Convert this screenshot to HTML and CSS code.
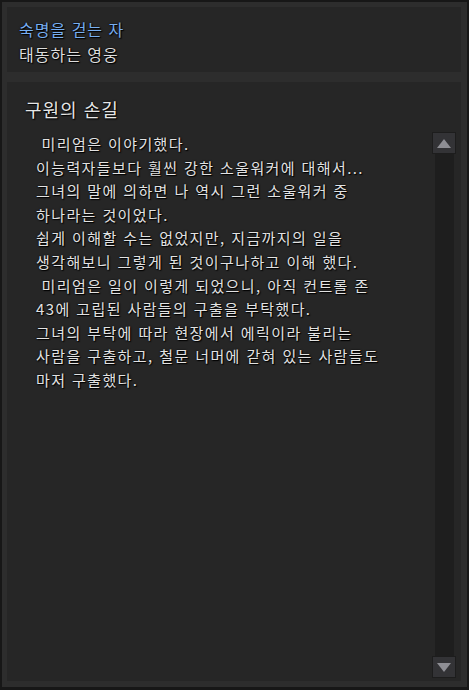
FILE: index.html
```html
<!DOCTYPE html>
<html lang="ko">
<head>
    <meta charset="UTF-8">
    <title>구원의 손길</title>
    <link rel="stylesheet" href="styles.css">
</head>
<body>
<div class="frame">

    <!-- quest header -->
    <section class="panel quest-head">
        <p class="quest-chapter">숙명을 걷는 자</p>
        <p class="quest-name">태동하는 영웅</p>
    </section>

    <!-- quest story -->
    <section class="panel quest-body">
        <h1 class="quest-title">구원의 손길</h1>
        <div class="story-row">
            <p class="story">&nbsp;미리엄은 이야기했다.<br>이능력자들보다 훨씬 강한 소울워커에 대해서...<br>그녀의 말에 의하면 나 역시 그런 소울워커 중<br>하나라는 것이었다.<br>쉽게 이해할 수는 없었지만, 지금까지의 일을<br>생각해보니 그렇게 된 것이구나하고 이해 했다.<br>&nbsp;미리엄은 일이 이렇게 되었으니, 아직 컨트롤 존<br>43에 고립된 사람들의 구출을 부탁했다.<br>그녀의 부탁에 따라 현장에서 에릭이라 불리는<br>사람을 구출하고, 철문 너머에 갇혀 있는 사람들도<br>마저 구출했다.</p>
            <div class="scrollbar">
                <div class="scroll-btn">
                    <svg width="14" height="9" viewBox="0 0 14 9"><polygon points="7,0 14,9 0,9" fill="#8e8e94"/></svg>
                </div>
                <div class="scroll-track"></div>
                <div class="scroll-btn">
                    <svg width="14" height="9" viewBox="0 0 14 9"><polygon points="0,0 14,0 7,9" fill="#8e8e94"/></svg>
                </div>
            </div>
        </div>
    </section>

</div>
</body>
</html>
```

FILE: styles.css
```css
body {
    margin: 0;
    padding: 2px;
    background-color: #171717;
    font-family: "Noto Sans CJK KR", "Noto Sans", sans-serif;
}

p {
    margin: 0;
}

.frame {
    height: 685px;
    width: 465px;
    box-sizing: border-box;
    padding: 5px 6px 6px 5px;
    background-color: #2d2d2d;
    display: flex;
    flex-direction: column;
    gap: 10px;
}

.panel {
    background-color: #262626;
}

.quest-head {
    height: 65px;
    box-sizing: border-box;
    padding: 11px 12px 0;
}

.quest-chapter,
.quest-name,
.quest-title,
.story {
    text-shadow: 0 0 2px #000, 1px 1px 1px #000;
    letter-spacing: 1px;
}

.quest-chapter {
    color: #78aef0;
    font-size: 16px;
    line-height: 22px;
}

.quest-name {
    color: #dcdcdc;
    font-size: 16px;
    line-height: 28px;
}

.quest-body {
    flex: 1;
    display: flex;
    flex-direction: column;
    padding: 0 5px 3px 0;
}

.quest-title {
    margin: 0;
    padding: 14px 0 0 18px;
    height: 36px;
    color: #e6e6e6;
    font-size: 18px;
    font-weight: normal;
    line-height: 26px;
}

.story-row {
    flex: 1;
    display: flex;
}

.story {
    flex: 1;
    padding: 0 0 0 29px;
    color: #e2e2e2;
    font-size: 15px;
    line-height: 23.6px;
    letter-spacing: 1.4px;
}

.scrollbar {
    width: 24px;
    display: flex;
    flex-direction: column;
    align-items: center;
}

.scroll-btn {
    width: 24px;
    height: 22px;
    box-sizing: border-box;
    border: 1px solid #1d1d1d;
    background-color: #333336;
    display: flex;
    align-items: center;
    justify-content: center;
}

.scroll-track {
    flex: 1;
    width: 19px;
    background-color: #1e1e1e;
}
```
